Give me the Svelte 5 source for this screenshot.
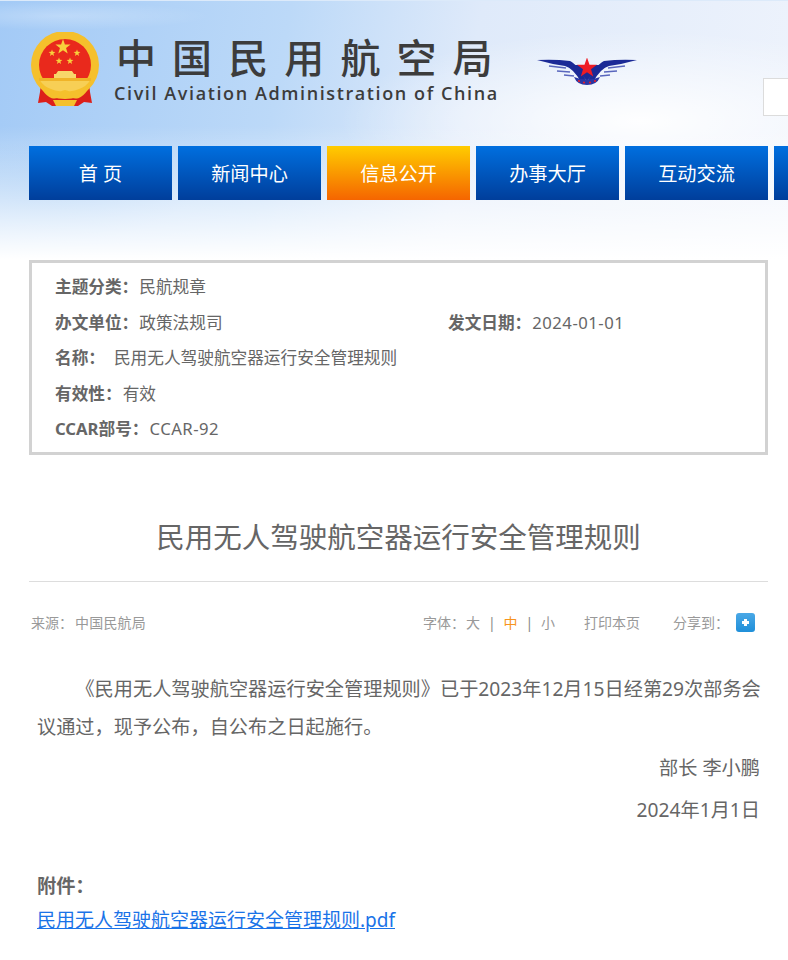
<script>
  const nav = [
    { label: '首 页' },
    { label: '新闻中心' },
    { label: '信息公开', active: true },
    { label: '办事大厅' },
    { label: '互动交流' },
    { label: '' }
  ];
  const info = [
    [{ key: '主题分类：', value: '民航规章' }],
    [{ key: '办文单位：', value: '政策法规司' }, { key: '发文日期：', value: '2024-01-01', latin: true }],
    [{ key: '名称：', value: '民用无人驾驶航空器运行安全管理规则', wide: true }],
    [{ key: '有效性：', value: '有效' }],
    [{ key: 'CCAR部号：', value: 'CCAR-92', latin: true }]
  ];
  const star = 'M0 -10 L2.4 -3.2 L9.5 -3.1 L3.8 1.2 L5.9 8.1 L0 4 L-5.9 8.1 L-3.8 1.2 L-9.5 -3.1 L-2.4 -3.2 Z';
</script>

<div class="page">
  <header class="top">
    <div class="brand">
      <svg class="emblem" width="70" height="74" viewBox="0 0 70 74">
        <path d="M11 50 L10 60 L8 71 L16 70 L22 74 L48 74 L54 70 L62 71 L60 60 L59 50 Z" fill="#dc1f1a" />
        <circle cx="35" cy="33" r="34" fill="#f5c02c" />
        <circle cx="35" cy="33" r="26" fill="#e9291c" />
        <path d="M9 46 H61 Q57 58 35 60 Q13 58 9 46 Z" fill="#f7cf55" />
        <path d="M28 39 H42 L44 42 H46 V46 H24 V42 H26 Z" fill="#f8d76a" />
        <path d="M9 46 H61 V49 H9 Z" fill="#f0b428" />
        <path d="M14 57 Q22 69 31 62 Q35 58 39 62 Q48 69 56 57" fill="none" stroke="#f5c02c" stroke-width="4" />
        <path d="M23 68 H47 L44 74 H26 Z" fill="#f5c02c" />
        <path transform="translate(33 15) scale(0.8)" d={star} fill="#f8cf3c" />
        <path transform="translate(22 21) scale(0.36)" d={star} fill="#f8cf3c" />
        <path transform="translate(47 21) scale(0.36)" d={star} fill="#f8cf3c" />
        <path transform="translate(29 29) scale(0.36)" d={star} fill="#f8cf3c" />
        <path transform="translate(40 29) scale(0.36)" d={star} fill="#f8cf3c" />
      </svg>
      <div class="wordmark">
        <div class="cn">中国民用航空局</div>
        <div class="en">Civil Aviation Administration of China</div>
      </div>
      <svg class="wings" width="100" height="28" viewBox="0 0 100 28">
        <g>
          <path d="M0 2 Q18 1 33 3 Q40 6 50 24 L44 24 Q36 10 28 8 Q14 6 0 2 Z" fill="#1b2a96" />
          <path d="M12 8 L29 10 M20 13 L33 14 M27 17 L37 18" stroke="#5966bd" stroke-width="1.7" fill="none" />
        </g>
        <g transform="matrix(-1 0 0 1 100 0)">
          <path d="M0 2 Q18 1 33 3 Q40 6 50 24 L44 24 Q36 10 28 8 Q14 6 0 2 Z" fill="#1b2a96" />
          <path d="M12 8 L29 10 M20 13 L33 14 M27 17 L37 18" stroke="#5966bd" stroke-width="1.7" fill="none" />
        </g>
        <path d="M36 7 H64 L50 23 Z" fill="#1b2a96" />
        <path d="M37 19 Q50 24 63 19 Q60 27 50 27 Q40 27 37 19 Z" fill="#2a36a4" />
        <path transform="translate(50 10) scale(1.05)" d={star} fill="#ee1c25" />
        <circle cx="42" cy="23" r="1.1" fill="#e8202a" />
        <circle cx="47" cy="24.5" r="1.1" fill="#e8202a" />
        <circle cx="53" cy="24.5" r="1.1" fill="#e8202a" />
        <circle cx="58" cy="23" r="1.1" fill="#e8202a" />
      </svg>
      <div class="search"></div>
    </div>

    <nav class="nav">
      {#each nav as item}
        <a class="nav-item" class:active={item.active} href="#top">{item.label}</a>
      {/each}
    </nav>
  </header>

  <main class="content">
    <section class="info">
      {#each info as row}
        <div class="info-row">
          {#each row as cell}
            <div class="cell" class:wide={cell.wide}>
              <b>{cell.key}</b><span class:latin={cell.latin}>{cell.value}</span>
            </div>
          {/each}
        </div>
      {/each}
    </section>

    <h1>民用无人驾驶航空器运行安全管理规则</h1>

    <div class="meta">
      <span class="source">来源：<span>中国民航局</span></span>
      <div class="tools">
        <span class="label">字体：</span>
        <span>大</span>
        <i>|</i>
        <span class="current">中</span>
        <i>|</i>
        <span>小</span>
        <span class="print">打印本页</span>
        <span class="share">分享到：</span>
        <span class="plus"></span>
      </div>
    </div>

    <article class="body">
      <p class="indent">《民用无人驾驶航空器运行安全管理规则》已于2023年12月15日经第29次部务会议通过，现予公布，自公布之日起施行。</p>
      <p class="right">部长 李小鹏</p>
      <p class="right">2024年1月1日</p>
      <p class="attach-label"><b>附件：</b></p>
      <p class="attach"><a href="#top">民用无人驾驶航空器运行安全管理规则.pdf</a></p>
    </article>
  </main>
</div>

<style>
  :global(body) {
    margin: 0;
    background: #fff;
  }

  .page {
    width: 788px;
    height: 960px;
    overflow: hidden;
    font-family: "Noto Sans", "Noto Sans CJK SC", sans-serif;
    color: #666;
  }

  .top {
    height: 260px;
    overflow: hidden;
    position: relative;
    background:
      linear-gradient(rgba(255, 255, 255, 0) 125px, rgba(255, 255, 255, 0.55) 200px, #fff 258px),
      radial-gradient(ellipse 300px 90px at 640px 120px, rgba(255, 255, 255, 0.95), transparent),
      radial-gradient(ellipse 150px 14px at 60px 15px, rgba(255, 255, 255, 0.25), transparent),
      radial-gradient(ellipse 140px 50px at 50px 190px, rgba(150, 195, 242, 0.7), transparent),
      linear-gradient(100deg, #a3caf6 0%, #bcd9f8 35%, #dfeafa 58%, #eef3fc 100%);
    border-top: 1px solid #dceafa;
    box-sizing: border-box;
  }

  .brand {
    display: flex;
    align-items: flex-start;
    height: 145px;
    padding: 31px 0 0 30px;
    box-sizing: border-box;
  }

  .emblem {
    flex: none;
    margin-right: 14px;
  }

  .wordmark {
    flex: none;
    width: 423px;
    color: #3c3c3c;
  }

  .cn {
    margin: 4px 0 0 2px;
    font-size: 40px;
    line-height: 44px;
    font-weight: 500;
    letter-spacing: 16.1px;
    white-space: nowrap;
  }

  .en {
    margin-top: 2px;
    font-family: "Open Sans", sans-serif;
    font-size: 18px;
    line-height: 22px;
    font-weight: 600;
    letter-spacing: 1.6px;
    white-space: nowrap;
  }

  .wings {
    flex: none;
    margin-top: 26px;
  }

  .search {
    flex: none;
    width: 60px;
    height: 38px;
    margin: 46px 0 0 126px;
    box-sizing: border-box;
    background: #fff;
    border: 1px solid #dcdcdc;
  }

  .nav {
    display: flex;
    gap: 6px;
    padding-left: 29px;
  }

  .nav-item {
    flex: none;
    width: 143px;
    height: 54px;
    line-height: 56px;
    text-align: center;
    font-size: 19.2px;
    color: #fff;
    text-decoration: none;
    background: linear-gradient(#006fdf, #003e9b);
  }

  .nav-item.active {
    background: linear-gradient(#ffcc00, #f56500);
  }

  .content {
    padding: 0 20px 0 29px;
  }

  .info {
    height: 195px;
    box-sizing: border-box;
    border: 3px solid #d2d2d2;
    padding: 6px 0 0 23px;
    font-size: 16.67px;
  }

  .info-row {
    display: flex;
    height: 35.5px;
    line-height: 35.5px;
  }

  .cell {
    width: 393px;
    flex: none;
    white-space: nowrap;
  }

  .cell b {
    font-weight: 700;
    margin-right: 1px;
  }

  .cell.wide b {
    margin-right: 9px;
  }

  .latin {
    letter-spacing: 0.5px;
  }

  h1 {
    margin: 61px 0 0;
    font-size: 28.5px;
    line-height: 42px;
    font-weight: 400;
    text-align: center;
    color: #666;
  }

  .meta {
    display: flex;
    justify-content: space-between;
    align-items: center;
    margin-top: 23px;
    padding: 0 13px 0 2px;
    height: 80px;
    border-top: 1px solid #ddd;
    font-size: 14px;
    color: #999;
  }

  .source span {
    margin-left: 2px;
    letter-spacing: 0.2px;
  }

  .tools {
    display: flex;
    align-items: center;
  }

  .label {
    margin-right: 1px;
  }

  .tools i {
    width: 23.5px;
    text-align: center;
    font-style: normal;
    color: #888;
  }

  .current {
    color: #f7941d;
  }

  .print {
    margin-left: 29px;
  }

  .share {
    margin-left: 33px;
    margin-right: 7px;
  }

  .plus {
    width: 19px;
    height: 19px;
    border-radius: 3px;
    background: linear-gradient(#4aa8e6, #1f8fd9);
    position: relative;
  }

  .plus::before,
  .plus::after {
    content: "";
    position: absolute;
    background: #fff;
  }

  .plus::before {
    left: 6px;
    top: 8px;
    width: 7px;
    height: 3px;
  }

  .plus::after {
    left: 8px;
    top: 6px;
    width: 3px;
    height: 7px;
  }

  .body {
    padding: 8px 7px 0 8px;
    font-size: 19.2px;
    line-height: 37.5px;
  }

  .body p {
    margin: 0 0 4px;
  }

  .indent {
    text-indent: 2em;
  }

  .right {
    text-align: right;
    padding-right: 1px;
  }

  .body .attach-label {
    padding-top: 35px;
    margin-bottom: -3px;
  }

  .attach {
    font-size: 19px;
  }

  .attach a {
    color: #1a73e8;
  }
</style>
